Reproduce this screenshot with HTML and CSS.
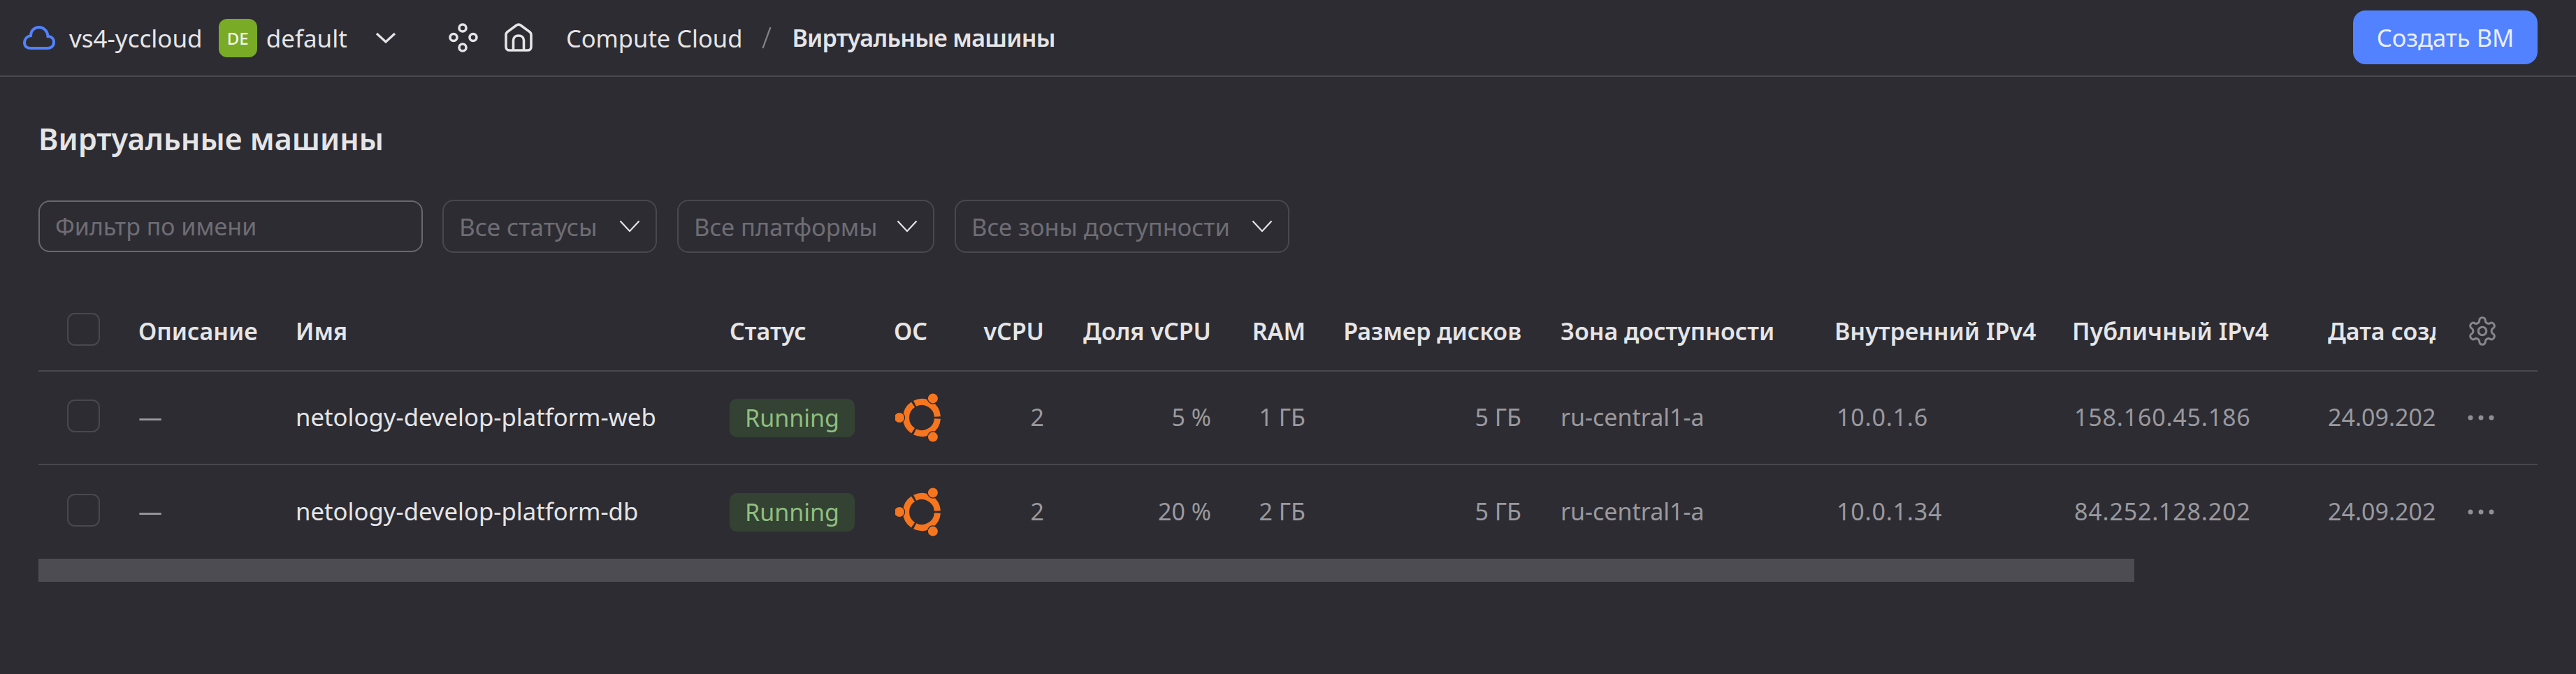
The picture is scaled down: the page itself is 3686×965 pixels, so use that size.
FILE: index.html
```html
<!DOCTYPE html>
<html lang="ru">
<head>
<meta charset="utf-8">
<title>Виртуальные машины</title>
<link rel="stylesheet" href="styles.css">
</head>
<body>
<header class="topbar">
  <svg class="ic-cloud" viewBox="0 0 46 34" fill="none"><path d="M11 32H35C40.500 32 44 28.500 44 23.500C44 18.500 40.500 15 35.500 15C35 7.500 29.500 2 23 2C16 2 11 7 11 14C5.500 15 2 19 2 24C2 29 5.500 32 11 32Z"/></svg>
  <span class="crumb cloud-name">vs4-yccloud</span>
  <span class="badge-de">DE</span>
  <span class="crumb folder-name">default</span>
  <svg class="ic-chev-top" viewBox="0 0 30 16" fill="none"><path d="M2 2L15 14L28 2"/></svg>
  <svg class="ic-nodes" viewBox="0 0 44 44" fill="none"><circle cx="21" cy="8" r="5"/><circle cx="8" cy="21.500" r="5"/><circle cx="36" cy="21.500" r="5"/><circle cx="21" cy="36" r="5"/></svg>
  <svg class="ic-home" viewBox="0 0 42 42" fill="none"><path d="M3 16.500C3 15 3.700 13.800 4.800 12.800L17.500 3.500C19.800 1.800 22.200 1.800 24.500 3.500L37.200 12.800C38.300 13.800 39 15 39 16.500V34C39 37 37 39 34 39H8C5 39 3 37 3 34Z"/><path d="M13.500 39V25C13.500 20.500 16.500 18 21 18C25.500 18 28.500 20.500 28.500 25V39"/></svg>
  <span class="crumb service">Compute Cloud</span>
  <svg class="ic-slash" viewBox="0 0 14 32" fill="none"><path d="M12.500 1L1.500 31"/></svg>
  <span class="crumb current">Виртуальные машины</span>
  <button class="btn-create">Создать ВМ</button>
</header>
<main class="page">
  <h1 class="title">Виртуальные машины</h1>
  <div class="filters">
    <div class="field name-filter">Фильтр по имени</div>
    <div class="field select sel-status"><span>Все статусы</span><svg class="ic-chev" viewBox="0 0 30 18" fill="none"><path d="M1.500 1.500L15 16L28.500 1.500"/></svg></div>
    <div class="field select sel-platform"><span>Все платформы</span><svg class="ic-chev" viewBox="0 0 30 18" fill="none"><path d="M1.500 1.500L15 16L28.500 1.500"/></svg></div>
    <div class="field select sel-zone"><span>Все зоны доступности</span><svg class="ic-chev" viewBox="0 0 30 18" fill="none"><path d="M1.500 1.500L15 16L28.500 1.500"/></svg></div>
  </div>
  <div class="table">
    <div class="row head">
      <div class="cell"><span class="check"></span></div>
      <div class="cell">Описание</div>
      <div class="cell">Имя</div>
      <div class="cell">Статус</div>
      <div class="cell">ОС</div>
      <div class="cell right">vCPU</div>
      <div class="cell right">Доля vCPU</div>
      <div class="cell right">RAM</div>
      <div class="cell right">Размер дисков</div>
      <div class="cell zone">Зона доступности</div>
      <div class="cell">Внутренний IPv4</div>
      <div class="cell">Публичный IPv4</div>
      <div class="cell clip">Дата создания</div>
      <div class="cell act"><svg class="ic-gear" viewBox="0 0 24 24" fill="none"><path d="M12.220 2h-.44a2 2 0 0 0-2 2v.18a2 2 0 0 1-1 1.730l-.43.25a2 2 0 0 1-2 0l-.15-.08a2 2 0 0 0-2.730.73l-.22.38a2 2 0 0 0 .73 2.730l.15.1a2 2 0 0 1 1 1.720v.51a2 2 0 0 1-1 1.740l-.15.09a2 2 0 0 0-.73 2.730l.22.38a2 2 0 0 0 2.730.73l.15-.08a2 2 0 0 1 2 0l.43.25a2 2 0 0 1 1 1.730V20a2 2 0 0 0 2 2h.44a2 2 0 0 0 2-2v-.18a2 2 0 0 1 1-1.730l.43-.25a2 2 0 0 1 2 0l.15.08a2 2 0 0 0 2.730-.73l.22-.39a2 2 0 0 0-.73-2.730l-.15-.08a2 2 0 0 1-1-1.740v-.5a2 2 0 0 1 1-1.740l.15-.09a2 2 0 0 0 .73-2.730l-.22-.38a2 2 0 0 0-2.730-.73l-.15.08a2 2 0 0 1-2 0l-.43-.25a2 2 0 0 1-1-1.730V4a2 2 0 0 0-2-2z"/><circle cx="12" cy="12" r="3"/></svg></div>
    </div>
    <div class="row">
      <div class="cell"><span class="check"></span></div>
      <div class="cell muted">—</div>
      <div class="cell strong">netology-develop-platform-web</div>
      <div class="cell"><span class="status">Running</span></div>
      <div class="cell"><svg class="ic-ubuntu" viewBox="-3 -3 76 76" fill="none"><path class="ring" d="M57.450 36.490A22.500 22.500 0 0 1 25.070 55.190M22.480 53.700A22.500 22.500 0 0 1 22.480 16.300M25.070 14.810A22.500 22.500 0 0 1 57.450 33.510"/><circle class="spot" cx="50.900" cy="7.400" r="7"/><circle class="spot" cx="50.900" cy="62.600" r="7"/><circle class="spot" cx="3" cy="35" r="7"/></svg></div>
      <div class="cell right muted">2</div>
      <div class="cell right muted">5 %</div>
      <div class="cell right muted">1 ГБ</div>
      <div class="cell right muted">5 ГБ</div>
      <div class="cell zone muted">ru-central1-a</div>
      <div class="cell muted ip">10.0.1.6</div>
      <div class="cell muted ip">158.160.45.186</div>
      <div class="cell clip muted">24.09.2023</div>
      <div class="cell act"><svg class="ic-dots" viewBox="0 0 38 8"><circle cx="4" cy="4" r="3.500"/><circle cx="19" cy="4" r="3.500"/><circle cx="34" cy="4" r="3.500"/></svg></div>
    </div>
    <div class="row">
      <div class="cell"><span class="check"></span></div>
      <div class="cell muted">—</div>
      <div class="cell strong">netology-develop-platform-db</div>
      <div class="cell"><span class="status">Running</span></div>
      <div class="cell"><svg class="ic-ubuntu" viewBox="-3 -3 76 76" fill="none"><path class="ring" d="M57.450 36.490A22.500 22.500 0 0 1 25.070 55.190M22.480 53.700A22.500 22.500 0 0 1 22.480 16.300M25.070 14.810A22.500 22.500 0 0 1 57.450 33.510"/><circle class="spot" cx="50.900" cy="7.400" r="7"/><circle class="spot" cx="50.900" cy="62.600" r="7"/><circle class="spot" cx="3" cy="35" r="7"/></svg></div>
      <div class="cell right muted">2</div>
      <div class="cell right muted">20 %</div>
      <div class="cell right muted">2 ГБ</div>
      <div class="cell right muted">5 ГБ</div>
      <div class="cell zone muted">ru-central1-a</div>
      <div class="cell muted ip">10.0.1.34</div>
      <div class="cell muted ip">84.252.128.202</div>
      <div class="cell clip muted">24.09.2023</div>
      <div class="cell act"><svg class="ic-dots" viewBox="0 0 38 8"><circle cx="4" cy="4" r="3.500"/><circle cx="19" cy="4" r="3.500"/><circle cx="34" cy="4" r="3.500"/></svg></div>
    </div>
  </div>
  <div class="scroll-track"><div class="scroll-thumb"></div></div>
</main>
</body>
</html>
```
FILE: styles.css
```css
* { box-sizing: border-box; }
html, body { margin: 0; height: 100%; }
body {
  background: #2d2c33;
  color: #e5e5e6;
  font-family: "Noto Sans", "Liberation Sans", sans-serif;
  font-size: 34px;
  overflow: hidden;
}
.topbar {
  height: 110px;
  border-bottom: 2px solid #49484f;
  display: flex;
  align-items: center;
  padding: 0 55px 0 33px;
}
.crumb { white-space: nowrap; }
svg { display: block; flex: none; }
.ic-cloud { width: 46px; height: 34px; stroke: #5282ff; stroke-width: 4; margin-right: 20px; }
.cloud-name { font-size: 35px; }
.folder-name { font-size: 35px; }
.badge-de {
  width: 55px; height: 55px; border-radius: 12px;
  background: #7aab27; color: #f4f7ec;
  display: flex; align-items: center; justify-content: center;
  font-size: 24px; font-weight: 500;
  margin: 0 13px 0 23px;
}
.ic-chev-top { width: 30px; height: 16px; stroke: #e5e5e6; stroke-width: 3.2; margin-left: 40px; }
.ic-nodes { width: 44px; height: 44px; stroke: #e5e5e6; stroke-width: 3.6; margin-left: 74px; }
.ic-home { width: 42px; height: 42px; stroke: #e5e5e6; stroke-width: 3.6; margin-left: 36px; }
.service { margin-left: 47px; font-size: 34.500px; }
.ic-slash { width: 14px; height: 32px; stroke: #828186; stroke-width: 2.2; margin: 0 29px 0 28px; }
.current { font-weight: 600; letter-spacing: -.7px; }
.btn-create {
  margin-left: auto;
  width: 264px; height: 77px;
  margin-top: -1px;
  background: #5282ff; color: #e9eeff;
  border: 0; border-radius: 18px;
  font: inherit;
  font-size: 34.500px;
}
.page { padding: 0 55px; }
.title { margin: 59px 0 0; font-size: 43.200px; line-height: 60px; font-weight: 600; }
.filters { display: flex; align-items: center; margin-top: 57px; }
.field {
  height: 76px;
  border: 2px solid #49484f;
  border-radius: 16px;
  color: #6e6d73;
  display: flex; align-items: center;
  padding: 0 22px;
  white-space: nowrap;
  font-size: 34.500px;
}
.name-filter { width: 550px; height: 74px; border-color: #69686e; margin-right: 28px; font-size: 34px; }
.select { justify-content: space-between; margin-right: 29px; }
.sel-status { width: 307px; font-size: 35px; }
.sel-platform { width: 368px; }
.sel-zone { width: 479px; margin-right: 0; }
.ic-chev { width: 30px; height: 18px; stroke: #e5e5e6; stroke-width: 2.2; }
.table { margin-top: 45px; }
.row {
  display: grid;
  grid-template-columns: 102px 225px 621px 235px 121px 94px 239px 135px 309px 448px 340px 366px 154px 1fr;
  height: 134px;
  padding-left: 41px;
  border-bottom: 2px solid #49484f;
  align-items: center;
}
.row:last-child { border-bottom: 0; }
.row.head { height: 125px; padding-top: 11px; font-weight: 600; }
.cell { white-space: nowrap; }
.right { text-align: right; }
.zone { padding-left: 56px; }
.clip { overflow: hidden; }
.act { padding-left: 46px; }
.muted { color: #9a999e; padding-bottom: 3px; }
.ip { letter-spacing: .8px; padding-left: 3px; }
.strong { color: #e5e5e6; font-size: 34.700px; padding-bottom: 3px; }
.check {
  display: block; width: 47px; height: 47px;
  margin-top: -5px;
  border: 2px solid #49484f; border-radius: 11px;
}
.status {
  display: inline-flex; align-items: center; justify-content: center;
  width: 179px; height: 55px; border-radius: 10px;
  background: #334233; color: #8fbf7f;
}
.ic-ubuntu { width: 76px; height: 76px; margin-left: 2px; }
.ring { stroke: #f6761f; stroke-width: 9; }
.spot { fill: #f6761f; stroke: #2d2c33; stroke-width: 2.500; paint-order: stroke; }
.ic-gear { width: 46px; height: 46px; stroke: #87868b; stroke-width: 1.6; margin-left: -2px; }
.ic-dots { width: 38px; height: 8px; fill: #8f8e93; }
.scroll-thumb { width: 2999px; height: 33px; background: #4d4c53; }
```
